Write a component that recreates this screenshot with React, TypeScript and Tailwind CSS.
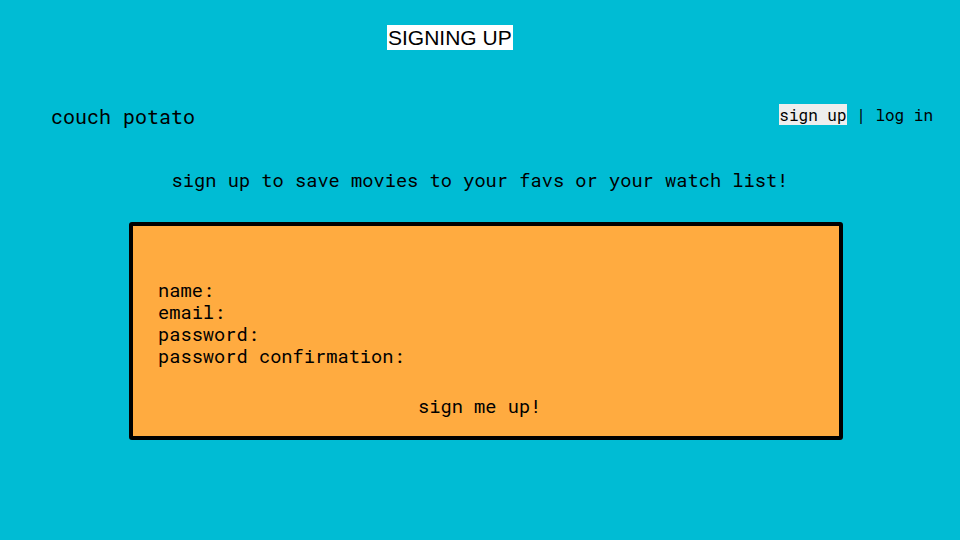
import React from 'react';

const mono = { fontFamily: '"Roboto Mono", "DejaVu Sans Mono", monospace' };

export default function App() {
    return (
        <div className="w-full h-[540px] bg-[#00bcd4] text-black overflow-hidden" style={mono}>
            <div className="pt-[25px] pl-[387px]">
                <span className="inline-block bg-white px-[1px] text-[21px] leading-[25px] font-['Liberation_Sans',sans-serif]">SIGNING UP</span>
            </div>

            <div className="mt-[48px] h-[34px] flex justify-between pl-[51px] pr-[27px]">
                <span className="text-[20px] leading-[34px]">couch potato</span>
                <div className="pt-[6px] text-[16px] leading-[19px] whitespace-pre">
                    <span className="bg-[#eeeeee]">sign up</span> | log in
                </div>
            </div>

            <p className="mt-[36px] text-center text-[18.7px] leading-[22px]">
                sign up to save movies to your favs or your watch list!
            </p>

            <div className="mt-[31px] ml-[129px] w-[714px] h-[218px] bg-[#ffab40] border-4 border-black rounded-[3px] pt-[53px] pl-[25px] text-[18.7px] leading-[22px]">
                <div>name:</div>
                <div>email:</div>
                <div>password:</div>
                <div>password confirmation:</div>
                <div className="mt-[28px] pl-[260px]">sign me up!</div>
            </div>
        </div>
    );
}
